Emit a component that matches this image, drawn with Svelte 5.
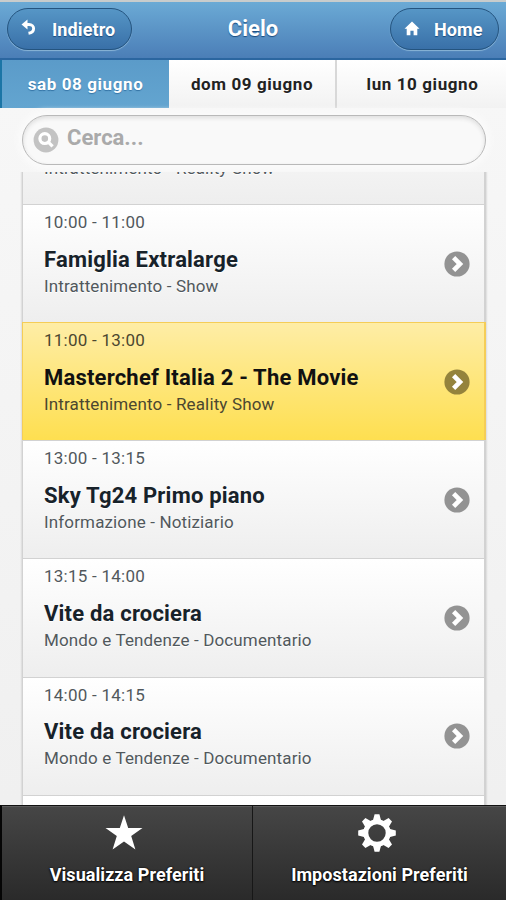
<script>
  const days = ["sab 08 giugno", "dom 09 giugno", "lun 10 giugno"];
  let activeDay = 0;

  const programs = [
    { genre: "Intrattenimento - Reality Show" },
    { time: "10:00 - 11:00", title: "Famiglia Extralarge", genre: "Intrattenimento - Show" },
    { time: "11:00 - 13:00", title: "Masterchef Italia 2 - The Movie", genre: "Intrattenimento - Reality Show", onAir: true },
    { time: "13:00 - 13:15", title: "Sky Tg24 Primo piano", genre: "Informazione - Notiziario" },
    { time: "13:15 - 14:00", title: "Vite da crociera", genre: "Mondo e Tendenze - Documentario" },
    { time: "14:00 - 14:15", title: "Vite da crociera", genre: "Mondo e Tendenze - Documentario" },
    {}
  ];
</script>

<div class="page">
  <header>
    <button class="nav back">
      <svg width="16" height="18" viewBox="0 0 16 18">
        <path d="M0.5 5.5 L6.5 0.5 V10.5 Z" fill="#fff" />
        <path d="M5 5.5 H8 C14 5.5 14.5 13 7.5 14.3" fill="none" stroke="#fff" stroke-width="2.9" />
      </svg>
      <span>Indietro</span>
    </button>
    <h1>Cielo</h1>
    <button class="nav home">
      <svg width="16" height="15" viewBox="0 0 16 15">
        <path d="M8 0.5 L15.5 7.8 H13.3 V14.2 H9.6 V9.8 H6.4 V14.2 H2.7 V7.8 H0.5 Z" fill="#fff" />
      </svg>
      <span>Home</span>
    </button>
  </header>

  <nav class="days">
    {#each days as day, i}
      <button class="day" class:active={i === activeDay} on:click={() => (activeDay = i)}>{day}</button>
    {/each}
  </nav>

  <div class="search">
    <svg width="26" height="26" viewBox="0 0 26 26">
      <circle cx="13" cy="13" r="12.4" fill="#c3c3c3" />
      <circle cx="11.8" cy="11.6" r="4.9" fill="none" stroke="#fff" stroke-width="3.2" />
      <path d="M15.3 15.1 L19.6 19.4" stroke="#fff" stroke-width="3.2" />
    </svg>
    <input placeholder="Cerca..." />
  </div>

  <main>
    <ul>
      {#each programs as program}
        <li class:on-air={program.onAir}>
          <div class="info">
            <p class="time">{program.time ?? ""}</p>
            <h2>{program.title ?? ""}</h2>
            <p class="genre">{program.genre ?? ""}</p>
          </div>
          <svg width="26" height="26" viewBox="0 0 26 26">
            <circle cx="13" cy="13" r="12.6" fill={program.onAir ? "#94833c" : "#939393"} />
            <path d="M9.6 6.6 L16 13 L9.6 19.4" fill="none" stroke="#fff" stroke-width="4.6" />
          </svg>
        </li>
      {/each}
    </ul>
  </main>

  <footer>
    <button>
      <svg width="38" height="38" viewBox="0 0 38 38">
        <path d="M19 1.2 L23.2 14 H37.5 L26.2 22 L30.4 35.6 L19 27.4 L7.6 35.6 L11.8 22 L0.5 14 H14.8 Z" fill="#fff" />
      </svg>
      <span>Visualizza Preferiti</span>
    </button>
    <button>
      <svg width="38" height="38" viewBox="-19 -19 38 38">
        {#each [0, 45, 90, 135, 180, 225, 270, 315] as angle}
          <path d="M-4.2 -12 L-2.4 -18.8 H2.4 L4.2 -12 Z" fill="#fff" transform="rotate({angle})" />
        {/each}
        <circle r="11.2" fill="none" stroke="#fff" stroke-width="5" />
      </svg>
      <span>Impostazioni Preferiti</span>
    </button>
  </footer>
</div>

<style>
  :global(body) {
    background: #f3f3f3;
  }
  .page {
    width: 506px;
    height: 900px;
    display: flex;
    flex-direction: column;
    overflow: hidden;
    box-sizing: border-box;
    background: linear-gradient(#f8f8f8, #efefef);
    font-family: Roboto, sans-serif;
  }
  button {
    margin: 0;
    padding: 0;
    border: 0;
    background: none;
    font-family: inherit;
    font-weight: bold;
  }
  h1, h2, p, ul {
    margin: 0;
    padding: 0;
  }

  header {
    flex: none;
    height: 60px;
    box-sizing: border-box;
    border-top: 2px solid #c8cccc;
    border-bottom: 2px solid #2b66a0;
    background: linear-gradient(#6baad5, #4b7eb7);
    display: grid;
    grid-template-columns: 125px 1fr 125px;
    align-items: start;
    padding: 6px 7px 0 7px;
  }
  .nav {
    height: 42px;
    box-sizing: border-box;
    border: 1.5px solid #24547f;
    border-radius: 21px;
    background: linear-gradient(#5696c6, #3970a8);
    box-shadow: 0 1px 1px #8ab5d8;
    color: #fff;
    font-size: 18px;
    letter-spacing: 0.1px;
    text-shadow: 0 1px 1px #194b7e;
    display: flex;
    align-items: center;
  }
  .back {
    padding-left: 13px;
    gap: 15px;
  }
  .home {
    width: 109px;
    justify-self: end;
    padding-left: 13px;
    gap: 14px;
  }
  .nav svg {
    position: relative;
    top: -1px;
  }
  h1 {
    color: #fff;
    font-size: 22px;
    line-height: 41px;
    text-align: center;
    text-shadow: 0 1px 1px #194b7e;
  }

  .days {
    flex: none;
    height: 48px;
    display: grid;
    grid-template-columns: 169px 166px 171px;
  }
  .day {
    box-sizing: border-box;
    background: linear-gradient(#fff, #f2f2f2);
    color: #222;
    font-size: 17px;
    line-height: 22px;
    letter-spacing: 0.6px;
    text-shadow: 0 1px 0 #fff;
  }
  .day:last-child {
    padding-left: 2px;
    border-left: 2px solid #d8d8d8;
  }
  .day.active {
    border-left: 2px solid #1b75a6;
    background: linear-gradient(#5b9bc9, #63a5d0);
    color: #fff;
    text-shadow: 0 1px 1px #3373a5;
  }

  .search {
    flex: none;
    height: 50px;
    margin: 7px 20px 7px 22px;
    box-sizing: border-box;
    border: 1.5px solid #b9b9b9;
    border-radius: 25px;
    background: #f9f9f9;
    box-shadow: inset 0 2px 4px #ddd, 0 0 5px 5px #fafafa;
    display: flex;
    align-items: center;
    padding-left: 10px;
  }
  input {
    flex: 1;
    height: 34px;
    margin: 0 0 5px 8px;
    padding: 0;
    border: 0;
    background: none;
    outline: none;
    font: bold 22px Roboto, sans-serif;
  }
  input::placeholder {
    color: #aaa;
  }

  main {
    flex: 1;
    min-height: 0;
    overflow: hidden;
    padding: 0 20px 0 22px;
  }
  /* scrolled down to the current program */
  ul {
    margin-top: -86.2px;
    list-style: none;
    box-shadow: 0 0 2px #bbb;
  }
  li {
    height: 118.15px;
    box-sizing: border-box;
    border: solid #d2d2d2;
    border-width: 1px 2px 0 1px;
    background: linear-gradient(#fff, #eee);
    display: flex;
    align-items: center;
    padding: 0 14px 0 21px;
    color: #51585c;
    text-shadow: 0 1px 0 #fff;
  }
  li.on-air {
    border-color: #f5cd57;
    background: linear-gradient(#feeda6, #fedf50);
    color: #4b4730;
    text-shadow: none;
  }
  .info {
    flex: 1;
    align-self: flex-start;
    padding-top: 7px;
  }
  .time,
  .genre {
    height: 20px;
    font-size: 17px;
    line-height: 20px;
    letter-spacing: 0.14px;
  }
  .time {
    letter-spacing: 0.25px;
  }
  h2 {
    height: 27px;
    margin-top: 13.8px;
    color: #17222a;
    font-size: 22px;
    line-height: 27px;
    letter-spacing: 0.2px;
  }
  .on-air h2 {
    color: #111;
  }
  .genre {
    margin-top: 3px;
  }

  footer {
    flex: none;
    height: 95px;
    box-sizing: border-box;
    border-top: 1px solid #111;
    border-left: 2px solid #050505;
    background: linear-gradient(#464646, #2a2a2a);
    display: grid;
    grid-template-columns: 250px 1fr;
    box-shadow: inset 0 1px 0 #5b5b5b;
  }
  footer button {
    display: flex;
    flex-direction: column;
    align-items: center;
    padding-top: 8px;
    color: #fff;
    font-size: 18px;
    letter-spacing: 0.06px;
    text-shadow: 0 1px 2px #000, 0 0 2px #000;
  }
  footer button + button {
    border-left: 1px solid #171717;
  }
  footer svg {
    margin-right: 6px;
  }
  footer span {
    margin-top: 12px;
  }
</style>
